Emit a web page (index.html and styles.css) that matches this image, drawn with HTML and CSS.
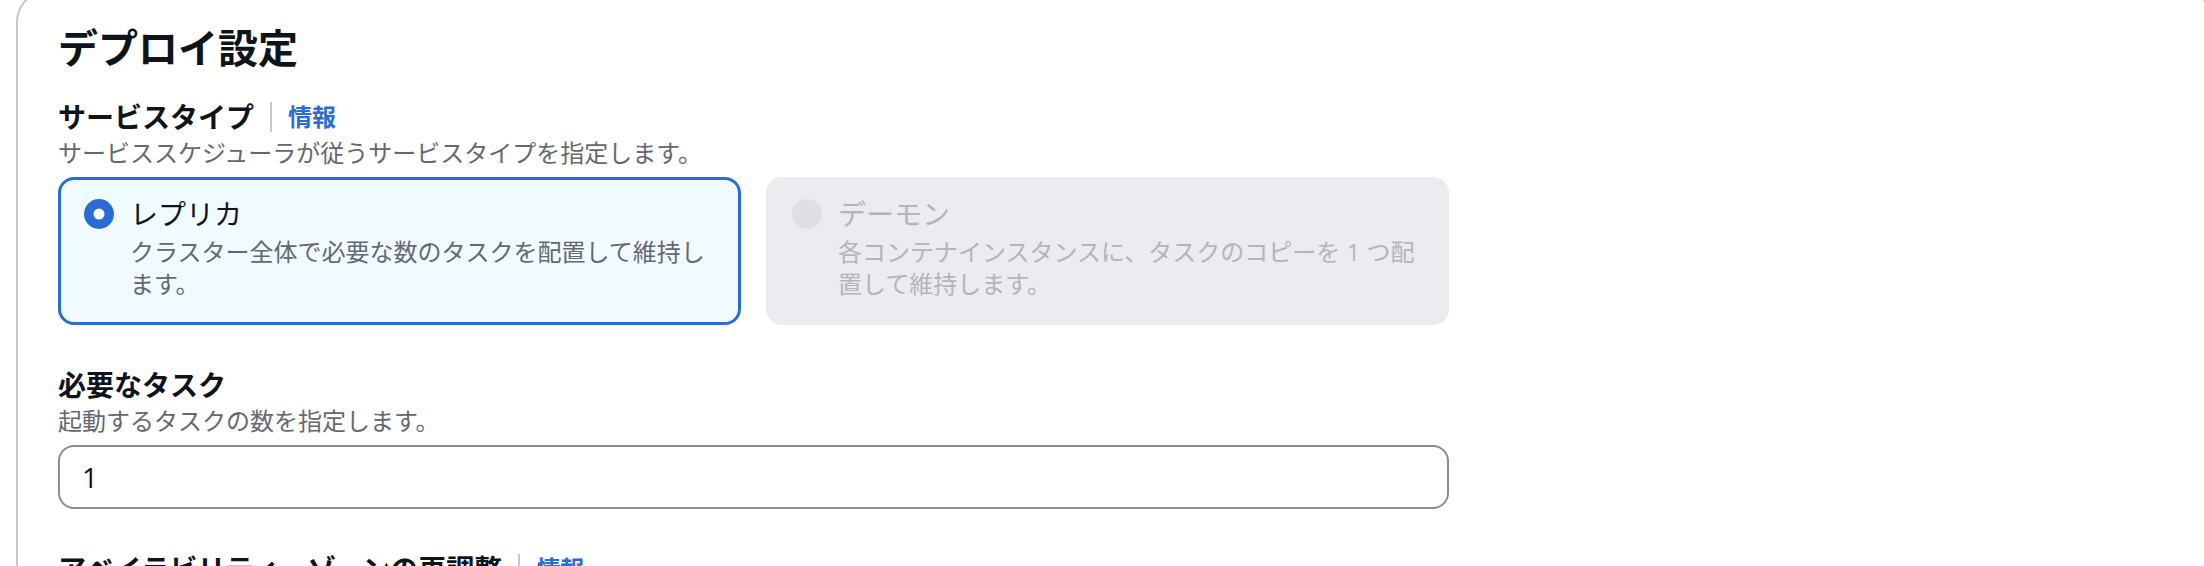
FILE: index.html
```html
<!DOCTYPE html>
<html lang="ja">
<head>
<meta charset="utf-8">
<title>デプロイ設定</title>
<link rel="stylesheet" href="styles.css">
</head>
<body>
<section class="container">
  <h2 class="container-title">デプロイ設定</h2>
  <div class="form">
    <div class="field">
      <div class="field-label">
        <span class="label-text">サービスタイプ</span>
        <span class="info-sep"></span>
        <a class="info-link">情報</a>
      </div>
      <div class="field-desc">サービススケジューラが従うサービスタイプを指定します。</div>
      <div class="field-control">
        <div class="tiles">
          <div class="tile tile-selected">
            <span class="radio">
              <svg width="30" height="30" viewBox="0 0 30 30"><circle cx="15" cy="15" r="15" class="radio-outer"/><circle cx="15" cy="15" r="5.5" fill="#ffffff"/></svg>
            </span>
            <div class="tile-body">
              <div class="tile-label">レプリカ</div>
              <div class="tile-desc">クラスター全体で必要な数のタスクを配置して維持します。</div>
            </div>
          </div>
          <div class="tile tile-disabled">
            <span class="radio">
              <svg width="30" height="30" viewBox="0 0 30 30"><circle cx="15" cy="15" r="15" class="radio-off"/></svg>
            </span>
            <div class="tile-body">
              <div class="tile-label">デーモン</div>
              <div class="tile-desc">各コンテナインスタンスに、タスクのコピーを 1 つ配置して維持します。</div>
            </div>
          </div>
        </div>
      </div>
    </div>

    <div class="field">
      <div class="field-label">
        <span class="label-text">必要なタスク</span>
      </div>
      <div class="field-desc">起動するタスクの数を指定します。</div>
      <div class="field-control">
        <input class="text-input" type="text" value="1">
      </div>
    </div>

    <div class="field">
      <div class="field-label">
        <span class="label-text">アベイラビリティーゾーンの再調整</span>
        <span class="info-sep"></span>
        <a class="info-link">情報</a>
      </div>
      <div class="field-desc">アベイラビリティーゾーン間でタスクを再調整します。</div>
    </div>
  </div>
</section>
</body>
</html>
```

FILE: styles.css
```css
html, body {
  margin: 0;
  padding: 0;
  background: #ffffff;
  overflow: hidden;
}

body {
  font-family: "Open Sans", "Noto Sans CJK JP", sans-serif;
  color: #0f141a;
}

.container {
  margin: -10px -10px 0 16px;
  border: 2px solid #c6c6cd;
  border-radius: 32px;
  padding: 32px 40px 60px 40px;
}

.container-title {
  margin: 0;
  font-size: 40px;
  line-height: 48px;
  font-weight: 700;
  color: #0f141a;
}

.form {
  margin-top: 25px;
  display: flex;
  flex-direction: column;
  gap: 40px;
}

.field-label {
  display: flex;
  align-items: center;
  font-size: 28px;
  line-height: 40px;
  font-weight: 700;
  color: #0f141a;
}

.info-sep {
  display: inline-block;
  width: 0;
  height: 30px;
  border-left: 2px solid #c6c6cd;
  margin: 0 16px;
}

.info-link {
  font-size: 24px;
  line-height: 32px;
  font-weight: 700;
  color: #2a6bd6;
  cursor: pointer;
}

.field-desc {
  font-size: 24px;
  line-height: 32px;
  color: #656871;
}

.field-control {
  margin-top: 8px;
  width: 1391px;
}

.tiles {
  display: grid;
  grid-template-columns: 1fr 1fr;
  gap: 25px;
}

.tile {
  display: flex;
  gap: 16px;
  border: 3px solid transparent;
  border-radius: 16px;
  padding: 14px 23px 22px 23px;
}

.tile-selected {
  border-color: #2a6bd6;
  background: #f0fbff;
}

.tile-disabled {
  border-color: #ebebf0;
  background: #ebebf0;
}

.radio {
  flex: none;
  width: 30px;
  height: 30px;
  margin-top: 5px;
}

.radio svg {
  display: block;
}

.radio-outer {
  fill: #2a6bd6;
}

.radio-off {
  fill: #dedee3;
}

.tile-body {
  flex: 1;
  min-width: 0;
}

.tile-label {
  font-size: 28px;
  line-height: 40px;
  font-weight: 400;
  color: #0f141a;
}

.tile-desc {
  padding-top: 2px;
  font-size: 24px;
  line-height: 32px;
  color: #656871;
}

.tile-disabled .tile-label,
.tile-disabled .tile-desc {
  color: #b4b4bb;
}

.text-input {
  display: block;
  box-sizing: border-box;
  width: 100%;
  height: 64px;
  margin: 0;
  border: 2px solid #8c8c94;
  border-radius: 16px;
  padding: 0 22px;
  font-family: "Open Sans", "Noto Sans CJK JP", sans-serif;
  font-size: 28px;
  color: #0f141a;
  background: #ffffff;
  outline: none;
}
```
